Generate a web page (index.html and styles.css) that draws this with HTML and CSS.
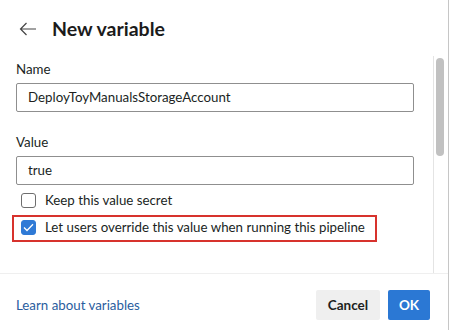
FILE: index.html
```html
<!DOCTYPE html>
<html>
<head>
    <meta charset="utf-8">
    <title>New variable</title>
    <link rel="stylesheet" href="styles.css">
</head>
<body>
    <div class="panel">
        <div class="header">
            <svg class="back" width="18" height="14" viewBox="0 0 18 14">
                <path d="M17 7H1.5M7.5 1L1.5 7l6 6" fill="none" stroke="#444" stroke-width="1.2"/>
            </svg>
            <h1>New variable</h1>
        </div>

        <div class="body">
            <div class="content">
                <label class="field-label">Name</label>
                <div class="input">DeployToyManualsStorageAccount</div>

                <label class="field-label value-label">Value</label>
                <div class="input">true</div>

                <div class="check-row">
                    <span class="box"></span>
                    <span>Keep this value secret</span>
                </div>
                <div class="highlight">
                    <div class="check-row">
                        <span class="box checked">
                            <svg width="11" height="9" viewBox="0 0 11 9">
                                <path d="M1 4.5l3 3L10 1.2" fill="none" stroke="#fff" stroke-width="1.3"/>
                            </svg>
                        </span>
                        <span>Let users override this value when running this pipeline</span>
                    </div>
                </div>
            </div>
            <div class="scrollbar">
                <div class="thumb"></div>
            </div>
        </div>

        <div class="footer">
            <a class="link" href="#">Learn about variables</a>
            <div class="actions">
                <button class="btn btn-secondary">Cancel</button>
                <button class="btn btn-primary">OK</button>
            </div>
        </div>
    </div>
</body>
</html>
```

FILE: styles.css
```css
body {
    margin: 0;
    background: #fff;
    font-family: Lato, "Noto Sans", sans-serif;
    color: #201f1e;
}

.panel {
    width: 448px;
    height: 330px;
    border-right: 1px solid #c6c6c6;
    display: flex;
    flex-direction: column;
}

.header {
    height: 56px;
    display: flex;
    align-items: center;
    padding-left: 19px;
    flex-shrink: 0;
}

.back {
    margin-right: 15px;
    margin-top: 1px;
}

h1 {
    margin: 0;
    font-size: 19.5px;
    font-weight: 700;
    color: #1b1b1b;
}

.body {
    flex: 1;
    display: flex;
    min-height: 0;
}

.content {
    flex: 1;
    padding: 3px 19px 0 16px;
    font-size: 13.3px;
    white-space: nowrap;
}

.field-label {
    display: block;
    line-height: 20px;
    margin-bottom: 4px;
}

.value-label {
    margin-top: 20px;
}

.input {
    height: 27px;
    border: 1px solid #8f8f8f;
    border-radius: 2px;
    padding: 0 11px;
    line-height: 27px;
}

.check-row {
    display: flex;
    align-items: center;
    height: 24px;
    padding-left: 5px;
}

.content > .check-row {
    margin-top: 3px;
}

.box {
    width: 13px;
    height: 13px;
    border: 1px solid #6e6e6e;
    border-radius: 3px;
    margin-right: 9px;
    display: flex;
    align-items: center;
    justify-content: center;
    flex-shrink: 0;
}

.box.checked {
    background: #2f7ad6;
    border-color: #2f7ad6;
}

.highlight {
    margin: 3px 0 0 -4px;
    width: 359px;
    padding: 0 0 3px 2px;
    height: 20px;
    border: 2px solid #d7322d;
    box-sizing: content-box;
}

.highlight .check-row {
    height: 20px;
}

.scrollbar {
    width: 12px;
    border-left: 1px solid #e4e4e4;
    padding: 2px 0 0 2px;
}

.thumb {
    width: 8px;
    height: 98px;
    border-radius: 4px;
    background: #c1c1c1;
}

.footer {
    height: 56px;
    border-top: 1px solid #efefef;
    display: flex;
    align-items: center;
    justify-content: space-between;
    padding: 0 18px 0 16px;
    flex-shrink: 0;
}

.link {
    color: #2a5d9e;
    text-decoration: none;
    font-size: 13.3px;
    margin-top: 6px;
}

.actions {
    display: flex;
    gap: 8px;
    margin-top: 6px;
}

.btn {
    height: 30px;
    border: none;
    border-radius: 2px;
    font-family: inherit;
    font-size: 13.5px;
    font-weight: 700;
    cursor: pointer;
}

.btn-secondary {
    width: 64px;
    background: #efefef;
    color: #201f1e;
}

.btn-primary {
    width: 42px;
    background: #2b78d4;
    color: #fff;
}
```
